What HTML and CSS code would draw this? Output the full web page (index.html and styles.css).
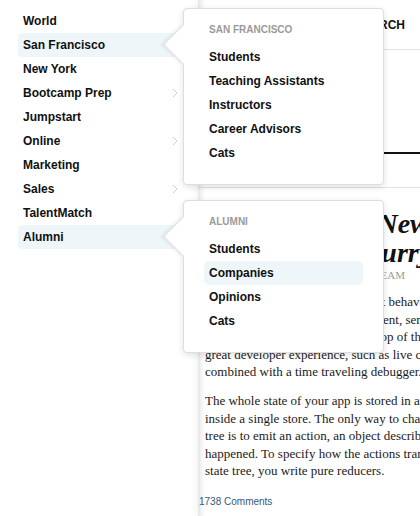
FILE: index.html
```html
<!DOCTYPE html>
<html lang="en">
<head>
<meta charset="utf-8">
<title>Menu</title>
<link rel="stylesheet" href="styles.css">
</head>
<body>
<div class="page">
  <nav class="sidebar">
    <ul class="menu">
      <li class="menu-item">World</li>
      <li class="menu-item is-active">San Francisco</li>
      <li class="menu-item">New York</li>
      <li class="menu-item">Bootcamp Prep <svg class="chev" viewBox="0 0 6 10"><polyline points="1,1 5,5 1,9"/></svg></li>
      <li class="menu-item">Jumpstart</li>
      <li class="menu-item">Online <svg class="chev" viewBox="0 0 6 10"><polyline points="1,1 5,5 1,9"/></svg></li>
      <li class="menu-item">Marketing</li>
      <li class="menu-item">Sales <svg class="chev" viewBox="0 0 6 10"><polyline points="1,1 5,5 1,9"/></svg></li>
      <li class="menu-item">TalentMatch</li>
      <li class="menu-item is-active">Alumni</li>
    </ul>
  </nav>

  <main class="main">
    <header class="topbar">
      <span class="topbar-link">SEARCH</span>
    </header>
    <div class="tabs"></div>
    <article class="article">
      <div class="article-body">
        <h1 class="title">Redux And Its New<br>Reducer And Currying</h1>
        <p class="byline">Written by: the Redux core team</p>
        <p class="text">It helps you write applications that behave consistently,<br>runs in different environments (client, server, native),<br>are fast to test, and to debug. On top of that, it provides a<br>great developer experience, such as live code editing<br>combined with a time traveling debugger.</p>
        <p class="text">The whole state of your app is stored in an object tree<br>inside a single store. The only way to change the state<br>tree is to emit an action, an object describing what<br>happened. To specify how the actions transform the<br>state tree, you write pure reducers.</p>
      </div>
      <a class="comments">1738 Comments</a>
    </article>
  </main>

  <div class="flyout flyout-sf">
    <div class="flyout-title">San Francisco</div>
    <ul class="flyout-list">
      <li class="flyout-item">Students</li>
      <li class="flyout-item">Teaching Assistants</li>
      <li class="flyout-item">Instructors</li>
      <li class="flyout-item">Career Advisors</li>
      <li class="flyout-item">Cats</li>
    </ul>
  </div>

  <div class="flyout flyout-alumni">
    <div class="flyout-title">Alumni</div>
    <ul class="flyout-list">
      <li class="flyout-item">Students</li>
      <li class="flyout-item is-active">Companies</li>
      <li class="flyout-item">Opinions</li>
      <li class="flyout-item">Cats</li>
    </ul>
  </div>
</div>
</body>
</html>
```
FILE: styles.css
```css
html, body {
  margin: 0;
  padding: 0;
  overflow: hidden;
  background: #fff;
}

body {
  width: 420px;
  height: 516px;
  font-family: "Liberation Sans", Arial, sans-serif;
  color: #111;
}

.page {
  position: relative;
  display: flex;
  width: 520px;
  min-height: 516px;
}

/* sidebar */
.sidebar {
  width: 198px;
  flex: none;
  padding-top: 9px;
  box-sizing: border-box;
}

.menu {
  list-style: none;
  margin: 0;
  padding: 0 15px 0 18px;
}

.menu-item {
  display: flex;
  align-items: center;
  justify-content: space-between;
  height: 24px;
  padding: 0 5px;
  border-radius: 4px;
  font-size: 12px;
  font-weight: 700;
  color: #111;
}

.menu-item.is-active {
  background: #eef6fa;
}

.chev {
  width: 6px;
  height: 10px;
  fill: none;
  stroke: #cfcfcf;
  stroke-width: 1;
}

/* main column */
.main {
  width: 322px;
  flex: none;
  min-height: 516px;
  box-shadow: inset 7px 0 6px -5px rgba(0, 0, 0, 0.14), -3px 0 6px rgba(0, 0, 0, 0.04);
}

.topbar {
  height: 49px;
  border-bottom: 1px solid #e3e3e3;
  display: flex;
  align-items: center;
  justify-content: flex-end;
  padding-right: 115px;
}

.topbar-link {
  font-size: 12px;
  font-weight: 700;
  color: #111;
}

.tabs {
  margin-top: 102px;
  height: 33px;
  border-top: 2px solid #111;
  border-bottom: 1px solid #e3e3e3;
}

.article-body {
  padding-left: 7px;
}

.title {
  margin: 21px 0 0;
  font-family: "Liberation Serif", "Times New Roman", serif;
  font-style: italic;
  font-weight: 700;
  font-size: 28px;
  line-height: 29px;
  color: #111;
  white-space: nowrap;
}

.byline {
  margin: 1px 0 0;
  font-family: "Liberation Serif", "Times New Roman", serif;
  font-size: 11px;
  line-height: 14px;
  color: #9a9a9a;
  text-transform: uppercase;
  white-space: nowrap;
}

.text {
  margin: 11.5px 0 0;
  font-family: "Liberation Serif", "Times New Roman", serif;
  font-size: 13px;
  line-height: 17.5px;
  color: #1a1a1a;
  white-space: nowrap;
}

.byline + .text {
  margin-top: 11px;
}

.comments {
  display: block;
  margin-top: 16.5px;
  padding-left: 1px;
  font-size: 10px;
  line-height: 12px;
  color: #35597a;
}

/* flyout menus */
.flyout {
  position: absolute;
  left: 183px;
  width: 201px;
  box-sizing: border-box;
  background: #fff;
  border: 1px solid #dedede;
  border-radius: 4px;
  box-shadow: 0 2px 6px rgba(0, 0, 0, 0.12);
  padding: 15px 20px 19px;
}

.flyout::before {
  content: "";
  position: absolute;
  left: -15px;
  top: 21px;
  width: 28px;
  height: 28px;
  background: #fff;
  border-left: 1px solid #dedede;
  border-bottom: 1px solid #dedede;
  box-shadow: -2px 2px 3px rgba(0, 0, 0, 0.05);
  transform: rotate(45deg);
}

.flyout-sf {
  top: 8px;
}

.flyout-alumni {
  top: 200px;
}

.flyout-title {
  position: relative;
  margin: 0 0 9px 5px;
  font-size: 10px;
  line-height: 12px;
  font-weight: 700;
  color: #9a9a9a;
  text-transform: uppercase;
}

.flyout-list {
  position: relative;
  list-style: none;
  margin: 0;
  padding: 0;
}

.flyout-item {
  display: flex;
  align-items: center;
  height: 24px;
  padding: 0 5px;
  border-radius: 5px;
  font-size: 12px;
  font-weight: 700;
  color: #111;
}

.flyout-item.is-active {
  background: #eef6fa;
}
```
